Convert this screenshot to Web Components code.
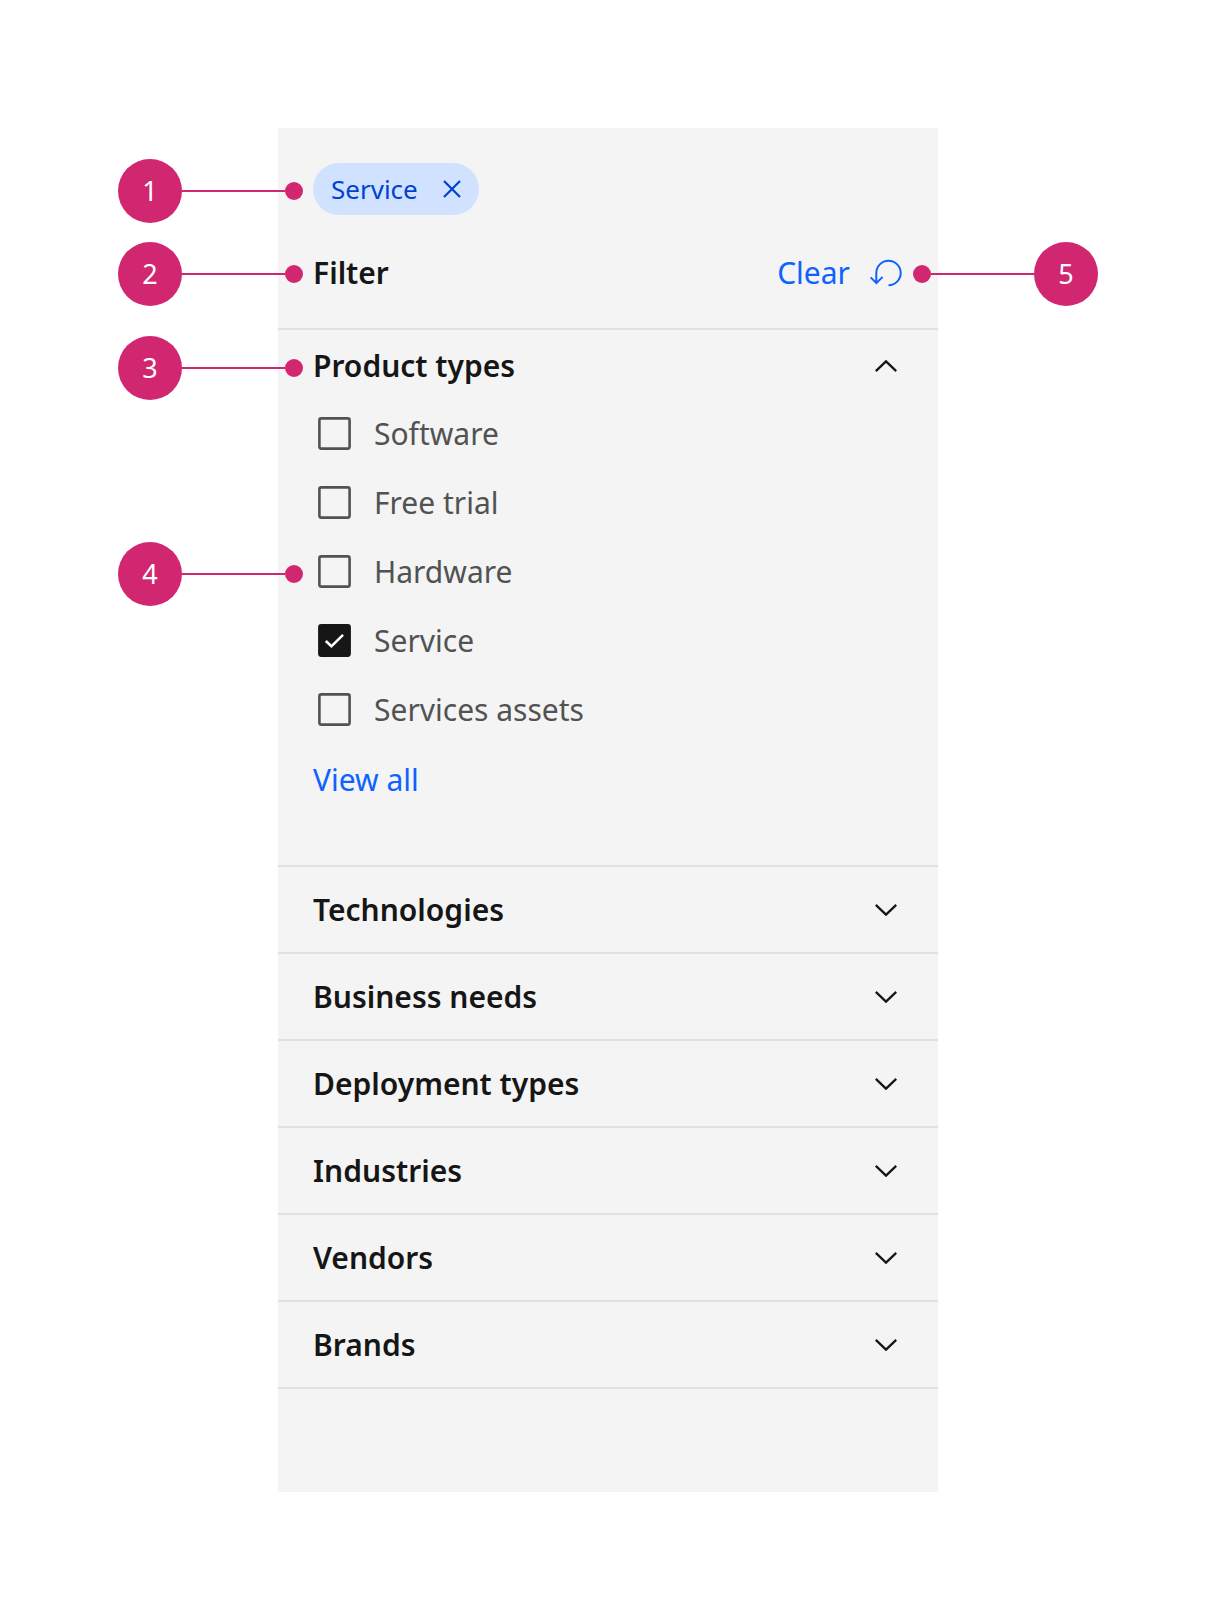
<!DOCTYPE html>
<html lang="en">
<head>
<meta charset="utf-8">
<meta name="viewport" content="width=device-width, initial-scale=1">
<title>Filter panel anatomy</title>
<style>
  body {
    margin: 0;
    background: #ffffff;
    color: #161616;
    font: 400 30px/36px "Noto Sans", sans-serif;
    --gutter: 35px;
    --reach: 160px;
    --rule: 2px solid #e0e0e0;
    --accent: #d12771;
    --link: #0f62fe;
    --text-2: #525252;
  }
  main { padding: 128px 160px; }
</style>
</head>
<body>
<main>
  <filter-panel>
    <filter-tag slot="tags">Service<callout-marker slot="marker">1</callout-marker></filter-tag>
    <filter-header slot="header" heading="Filter" action="Clear">
      <callout-marker slot="marker">2</callout-marker>
      <callout-marker slot="marker" side="right">5</callout-marker>
    </filter-header>
    <filter-section heading="Product types" open>
      <callout-marker slot="marker">3</callout-marker>
      <filter-option>Software</filter-option>
      <filter-option>Free trial</filter-option>
      <filter-option>Hardware<callout-marker slot="marker">4</callout-marker></filter-option>
      <filter-option checked>Service</filter-option>
      <filter-option>Services assets</filter-option>
      <view-link>View all</view-link>
    </filter-section>
    <filter-section heading="Technologies"></filter-section>
    <filter-section heading="Business needs"></filter-section>
    <filter-section heading="Deployment types"></filter-section>
    <filter-section heading="Industries"></filter-section>
    <filter-section heading="Vendors"></filter-section>
    <filter-section heading="Brands"></filter-section>
  </filter-panel>
</main>

<script>
const base = `
  :host, *, *::before, *::after { box-sizing: border-box; }
  button { margin: 0; padding: 0; border: 0; background: none; color: inherit; font: inherit; cursor: pointer; }
  h2, h3 { margin: 0; font-size: 30px; line-height: 36px; font-weight: 600; }
  svg { display: block; flex: none; fill: none; stroke: currentColor; stroke-width: 2; }
`;

class BaseElement extends HTMLElement {
  connectedCallback() {
    if (this.shadowRoot) return;
    this.attachShadow({ mode: 'open' }).innerHTML =
      `<style>${base}${this.styles()}</style>${this.markup()}`;
    this.ready();
  }
  ready() {}
}

/* Numbered disc with a leader line that ends in a dot on the panel's edge. */
customElements.define('callout-marker', class extends BaseElement {
  styles() { return `
    :host {
      position: absolute; left: calc(-1 * var(--reach)); top: calc(50% + 2px);
      margin-top: -32px; width: 185px; display: flex; align-items: center;
      color: #ffffff; font-size: 27px; line-height: 64px; font-weight: 400; pointer-events: none;
    }
    :host([side="right"]) { left: auto; right: calc(-1 * var(--reach)); flex-direction: row-reverse; }
    .disc { flex: none; width: 64px; height: 64px; border-radius: 50%; background: var(--accent); text-align: center; }
    .line { flex: 1; height: 2px; background: var(--accent); }
    .dot { flex: none; width: 18px; height: 18px; border-radius: 50%; background: var(--accent); }
  `; }
  markup() { return `<span class="disc"><slot></slot></span><span class="line"></span><span class="dot"></span>`; }
});

customElements.define('filter-panel', class extends BaseElement {
  styles() { return `
    :host { display: block; max-width: 660px; margin: 0 auto; padding: 35px 0 103px; background: #f4f4f4; }
    .sections { border-bottom: var(--rule); }
  `; }
  markup() { return `<slot name="tags"></slot><slot name="header"></slot><div class="sections"><slot></slot></div>`; }
});

customElements.define('filter-tag', class extends BaseElement {
  styles() { return `
    :host { position: relative; display: flex; padding: 0 var(--gutter); }
    .tag {
      display: flex; align-items: center; gap: 25px; height: 52px; padding: 0 18px;
      border-radius: 26px; background: #d0e2ff; color: #0043ce; font-size: 26px;
    }
  `; }
  markup() { return `
    <span class="tag"><span><slot></slot></span>
      <button type="button" aria-label="Remove filter">
        <svg width="18" height="18" viewBox="0 0 18 18"><path d="M1 1 17 17M17 1 1 17" stroke-width="2.2"/></svg>
      </button>
    </span><slot name="marker"></slot>`; }
});

customElements.define('filter-header', class extends BaseElement {
  styles() { return `
    :host {
      position: relative; display: flex; align-items: center; justify-content: space-between;
      min-height: 113px; padding: 2px 34px 0 var(--gutter);
    }
    button { display: flex; align-items: center; gap: 20px; color: var(--link); }
  `; }
  markup() { return `
    <h2>${this.getAttribute('heading')}</h2>
    <button type="button">${this.getAttribute('action')}
      <svg width="34" height="28" viewBox="0 0 34 28"><path d="M18.5 26.2A12.2 12.2 0 1 0 6.3 14V24M.7 18.4 6.4 24.1 12.6 17.9"/></svg>
    </button>
    <slot name="marker"></slot>`; }
});

customElements.define('filter-section', class extends BaseElement {
  styles() { return `
    :host { display: block; border-top: var(--rule); }
    h3 { position: relative; }
    button {
      display: flex; align-items: center; justify-content: space-between;
      width: 100%; min-height: 85px; padding: 0 41px 0 var(--gutter); text-align: left;
    }
    :host([open]) button { min-height: 71px; }
    :host([open]) svg { transform: scaleY(-1); }
    svg { stroke-width: 2.3; }
    .body { display: none; }
    :host([open]) .body { display: flex; flex-direction: column; gap: 36px; padding: 16px 0 67px; }
  `; }
  markup() { return `
    <h3><button type="button">${this.getAttribute('heading')}
      <svg width="22" height="12" viewBox="0 0 22 12"><path d="M.8.9 11 10.7 21.2.9"/></svg>
    </button><slot name="marker"></slot></h3>
    <div class="body"><slot></slot></div>`; }
  ready() {
    const button = this.shadowRoot.querySelector('button');
    const sync = () => button.setAttribute('aria-expanded', this.hasAttribute('open'));
    button.addEventListener('click', () => { this.toggleAttribute('open'); sync(); });
    sync();
  }
});

customElements.define('filter-option', class extends BaseElement {
  styles() { return `
    :host { position: relative; display: flex; height: 33px; padding: 0 40px; color: var(--text-2); }
    label { display: flex; align-items: center; gap: 23px; cursor: pointer; }
    .box { display: grid; width: 33px; height: 33px; }
    .box > * { grid-area: 1 / 1; }
    input { appearance: none; width: 33px; height: 33px; margin: 0; }
    svg { pointer-events: none; stroke-width: 2.6; }
    .tick { stroke: #ffffff; visibility: hidden; }
    input:checked + svg rect { fill: #161616; stroke: #161616; }
    input:checked + svg .tick { visibility: visible; }
  `; }
  markup() { return `
    <label for="box"><span class="box">
      <input type="checkbox" id="box" ${this.hasAttribute('checked') ? 'checked' : ''}>
      <svg width="33" height="33" viewBox="0 0 33 33">
        <rect x="1.4" y="1.4" width="30.2" height="30.2" rx="1.8"/>
        <path class="tick" d="M7.8 17 13.4 22.3 25 10.8"/>
      </svg>
    </span><span><slot></slot></span></label><slot name="marker"></slot>`; }
});

customElements.define('view-link', class extends BaseElement {
  styles() { return `
    :host { display: flex; padding: 0 var(--gutter); }
    a { color: var(--link); text-decoration: none; }
  `; }
  markup() { return `<a href="#all"><slot></slot></a>`; }
});
</script>
</body>
</html>
